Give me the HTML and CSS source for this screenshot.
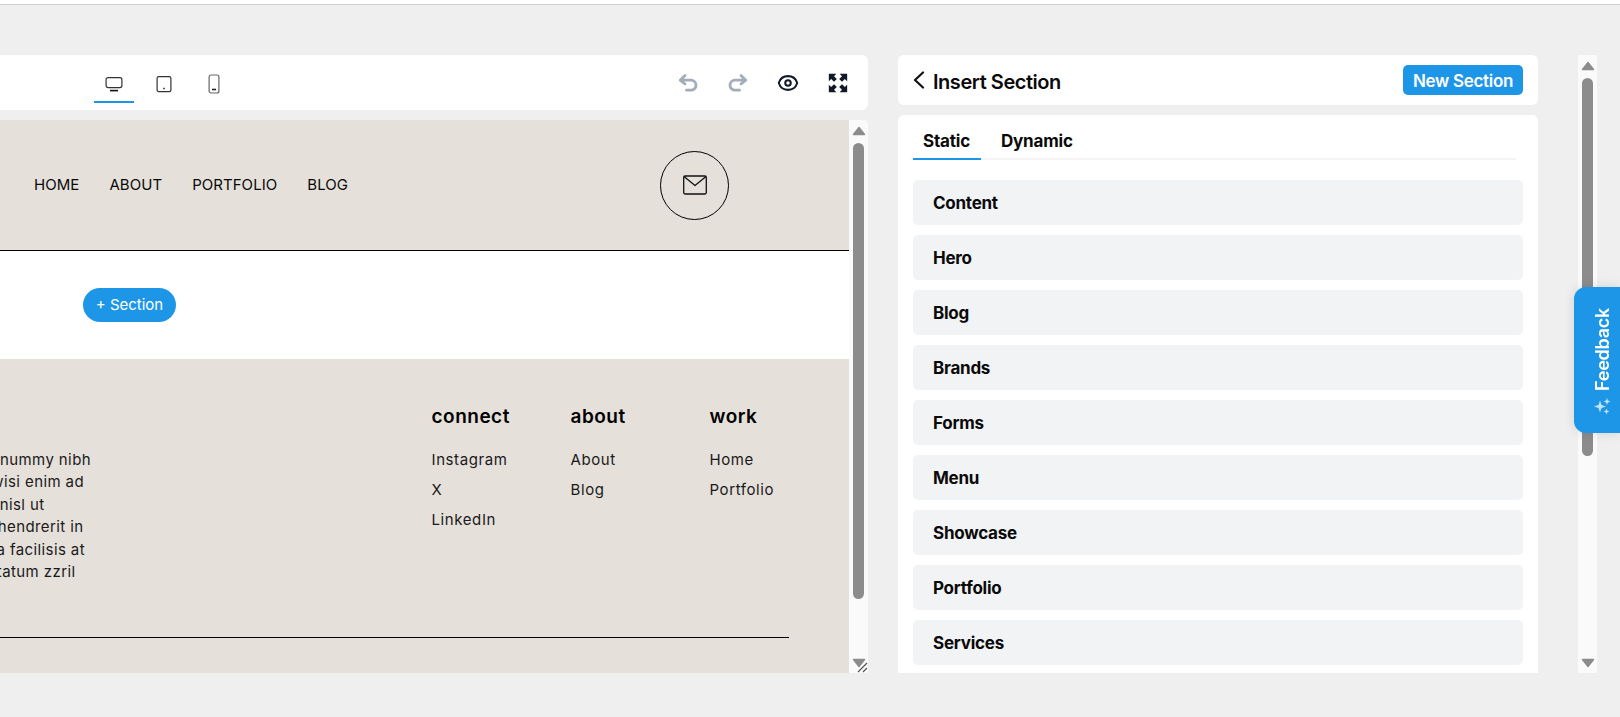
FILE: index.html
```html
<!DOCTYPE html>
<html lang="en">
<head>
<meta charset="utf-8">
<title>Insert Section</title>
<link rel="stylesheet" href="styles.css">
</head>
<body>
<div class="topbar"></div>
<main class="workspace">
  <section class="editor">
    <div class="toolbar">
      <div class="devices">
        <button class="device active" aria-label="Desktop">
          <svg width="18" height="18" viewBox="0 0 18 18" fill="none" stroke="#333" stroke-width="1.2"><rect x="1.1" y="2.6" width="15.8" height="10" rx="2"/><path d="M5 15.6h8" stroke="#111" stroke-width="1.6"/></svg>
        </button>
        <button class="device" aria-label="Tablet">
          <svg width="18" height="18" viewBox="0 0 18 18" fill="none" stroke="#333" stroke-width="1.2"><rect x="2.1" y="1.6" width="13.8" height="15" rx="1.6"/><path d="M8.2 13.5h1.6" stroke-width="1.6"/></svg>
        </button>
        <button class="device" aria-label="Mobile">
          <svg width="18" height="20" viewBox="0 0 18 20" fill="none" stroke="#666" stroke-width="1.2"><rect x="4.100" y="1" width="9.800" height="18" rx="2"/><path d="M7 15.500h4" stroke="#222" stroke-width="1.600"/></svg>
        </button>
      </div>
      <div class="actions">
        <span class="action">
          <svg width="20" height="20" viewBox="0 0 20 20" fill="none" stroke="#a3adba" stroke-width="2.800" stroke-linejoin="round" stroke-linecap="round"><path d="M7 2.500 2.200 7.200 7 11M2.200 7.200H13a5 5 0 0 1 0 10H8.500"/></svg>
        </span>
        <span class="action">
          <svg width="20" height="20" viewBox="0 0 20 20" fill="none" stroke="#a3adba" stroke-width="2.800" stroke-linejoin="round" stroke-linecap="round"><path d="M13 2.500l4.800 4.700L13 11M17.800 7.200H7a5 5 0 0 0 0 10h4.500"/></svg>
        </span>
        <span class="action">
          <svg width="22" height="22" viewBox="0 0 24 24" fill="none" stroke="#111827" stroke-width="2.200" stroke-linecap="round" stroke-linejoin="round"><path d="M2.036 12.322a1.012 1.012 0 0 1 0-.639C3.423 7.510 7.360 4.500 12 4.500c4.638 0 8.573 3.007 9.963 7.178.07.207.07.431 0 .639C20.577 16.490 16.640 19.500 12 19.500c-4.638 0-8.573-3.007-9.963-7.178Z"/><path d="M15 12a3 3 0 1 1-6 0 3 3 0 0 1 6 0Z"/></svg>
        </span>
        <span class="action">
          <svg width="20" height="20" viewBox="0 0 24 24" fill="#111827"><path d="M1 1h9l-2.800 2.800 3.400 3.400-3.400 3.400-3.400-3.400L1 10zM23 1v9l-2.800-2.800-3.400 3.400-3.400-3.400 3.400-3.400L14 1zM1 23v-9l2.800 2.800 3.400-3.400 3.400 3.400-3.400 3.400L10 23zM23 23h-9l2.800-2.800-3.400-3.400 3.400-3.400 3.400 3.400L23 14z"/></svg>
        </span>
      </div>
    </div>
    <div class="canvas">
      <div class="page">
        <header class="site-header">
          <nav class="site-nav">
            <a>HOME</a><a>ABOUT</a><a>PORTFOLIO</a><a>BLOG</a>
          </nav>
          <span class="mail">
            <svg width="26" height="20" viewBox="0 0 26 20" fill="none" stroke="#111" stroke-width="1.3" stroke-linejoin="round"><rect x="1.700" y="1" width="22.600" height="18" rx="1.400"/><path d="M2 1.600 13 10.600 24 1.600"/></svg>
          </span>
        </header>
        <div class="add-row"><button class="add-section">+ Section</button></div>
        <footer class="site-footer">
          <div class="footer-grid">
            <div class="footer-text">
              <span class="line l1">nonummy nibh</span>
              <span class="line l2">Ut wisi enim ad</span>
              <span class="line l3">lobortis nisl ut</span>
              <span class="line l4">in hendrerit in</span>
              <span class="line l5">nulla facilisis at</span>
              <span class="line l6">luptatum zzril</span>
            </div>
            <div class="footer-col"><h4>connect</h4><a>Instagram</a><a>X</a><a>LinkedIn</a></div>
            <div class="footer-col"><h4>about</h4><a>About</a><a>Blog</a></div>
            <div class="footer-col"><h4>work</h4><a>Home</a><a>Portfolio</a></div>
          </div>
          <div class="footer-rule"></div>
        </footer>
      </div>
      <div class="scrollbar canvas-bar">
        <svg class="arrow up" width="14" height="10" viewBox="0 0 14 10"><path d="M7 1.500 12.500 8.500H1.500Z"/></svg>
        <i class="thumb"></i>
        <svg class="arrow down" width="14" height="10" viewBox="0 0 14 10"><path d="M1.500 1.500H12.500L7 8.500Z"/></svg>
        <svg class="grip" width="11" height="11" viewBox="0 0 11 11" stroke="#555" stroke-width="1.200"><path d="M1 10 10 1M6 10l4-4"/></svg>
      </div>
    </div>
  </section>

  <aside class="side">
    <div class="side-head">
      <h2><svg width="12" height="18" viewBox="0 0 12 18" fill="none" stroke="#111" stroke-width="2.200" stroke-linecap="round" stroke-linejoin="round"><path d="M10 1.500 2 9l8 7.500"/></svg>Insert Section</h2>
      <button class="new-section">New Section</button>
    </div>
    <div class="side-panel">
      <div class="tabs"><span class="tab active">Static</span><span class="tab">Dynamic</span></div>
      <ul class="blocks">
        <li>Content</li>
        <li>Hero</li>
        <li>Blog</li>
        <li>Brands</li>
        <li>Forms</li>
        <li>Menu</li>
        <li>Showcase</li>
        <li>Portfolio</li>
        <li>Services</li>
      </ul>
    </div>
  </aside>

  <div class="scrollbar side-bar">
    <svg class="arrow up" width="14" height="10" viewBox="0 0 14 10"><path d="M7 1.500 12.500 8.500H1.500Z"/></svg>
    <i class="thumb"></i>
    <svg class="arrow down" width="14" height="10" viewBox="0 0 14 10"><path d="M1.500 1.500H12.500L7 8.500Z"/></svg>
  </div>
</main>
<button class="feedback">
  <span>Feedback</span>
  <svg width="18" height="18" viewBox="0 0 18 18" fill="#c4e3f9"><path d="M6 2.500 7.500 7 12 8.500 7.500 10 6 14.500 4.500 10 0 8.500 4.500 7zM13 0l.9 2.600 2.600.9-2.600.9-.9 2.600-.9-2.600-2.600-.9 2.600-.9zM12.500 10.500l.8 2.200 2.200.8-2.200.8-.8 2.200-.8-2.200-2.200-.8 2.200-.8z"/></svg>
</button>
</body>
</html>
```

FILE: styles.css
```css
* { box-sizing: border-box; }
html, body { margin: 0; height: 100%; overflow: hidden; }
body { background: #efefef; font-family: Inter, "Liberation Sans", sans-serif; color: #000; }
button { border: 0; font-family: inherit; padding: 0; }
i { display: block; }

.topbar { height: 5px; background: #fff; border-bottom: 1px solid #cfcfcf; }
.workspace { display: flex; height: 618px; margin-top: 50px; align-items: stretch; }

/* editor */
.editor { width: 868px; display: flex; flex-direction: column; gap: 10px; }
.toolbar { height: 55px; flex: none; background: #fff; border-radius: 0 6px 6px 0; display: flex; justify-content: space-between; padding: 0 18px 0 94px; }
.devices { display: flex; gap: 10px; }
.device { width: 40px; height: 48px; background: none; border-bottom: 2px solid transparent; display: flex; align-items: center; justify-content: center; padding-top: 12px; }
.device.active { border-bottom-color: #1e96e8; }
.actions { display: flex; gap: 26px; align-items: center; }
.action { width: 24px; height: 24px; display: flex; align-items: center; justify-content: center; }

.canvas { flex: 1; min-height: 0; display: flex; }
.page { width: 849px; display: flex; flex-direction: column; }
.site-header { height: 131px; flex: none; background: #e5e0da; border-bottom: 1px solid #000; display: flex; align-items: center; padding: 0 120px 0 34px; justify-content: space-between; }
.site-nav { display: flex; gap: 30px; font-size: 15px; line-height: 20px; letter-spacing: .05px; color: #0a0a0a; }
.mail { width: 69px; height: 69px; border: 1px solid #000; border-radius: 50%; display: flex; align-items: center; justify-content: center; }
.add-row { height: 108px; flex: none; background: #fff; padding: 37px 0 0 83px; }
.add-section { width: 93px; height: 34px; border-radius: 17px; background: #1e96e8; color: #fff; font-size: 15px; line-height: 32px; }

.site-footer { flex: 1; background: #e5e0da; padding-top: 46px; }
.footer-grid { display: grid; grid-template-columns: 532px 139px 139px 1fr; margin-left: -100px; }
.footer-text { display: flex; flex-direction: column; padding-top: 44px; font-size: 15px; line-height: 22.4px; color: #1a1a1a; letter-spacing: .4px; }
.line { text-align: right; white-space: nowrap; }
.l1 { padding-right: 341px; }
.l2 { padding-right: 348px; }
.l3 { padding-right: 387.500px; }
.l4 { padding-right: 348.500px; }
.l5 { padding-right: 347px; }
.l6 { padding-right: 356.500px; }
.footer-col { display: flex; flex-direction: column; font-size: 15px; line-height: 30px; color: #1a1a1a; letter-spacing: .6px; margin-left: -.5px; }
.footer-col h4 { margin: 0 0 16px; font-size: 19px; line-height: 24px; font-weight: 600; color: #000; letter-spacing: .5px; }
.footer-rule { width: 789px; height: 1px; background: #000; margin-top: 54px; }

/* scrollbars */
.scrollbar { position: relative; width: 19px; flex: none; background: #fafafa; display: flex; flex-direction: column; align-items: center; }
.canvas-bar { border-radius: 0 4px 0 0; }
.thumb { width: 11px; background: #8c8c8c; border-radius: 6px; flex: none; }
.canvas-bar .thumb { height: 456px; margin-top: 7px; }
.side-bar .thumb { height: 378px; margin-top: 7px; }
.arrow { flex: none; fill: #8c8c8c; stroke: #8c8c8c; stroke-width: 1.5; stroke-linejoin: round; }
.arrow.up { margin-top: 6px; }
.arrow.down { margin-top: auto; margin-bottom: 5px; }
.grip { position: absolute; right: 0; bottom: 0; }

/* side panel */
.side { width: 640px; margin-left: 30px; display: flex; flex-direction: column; gap: 10px; }
.side-head { height: 50px; flex: none; background: #fff; border-radius: 6px; display: flex; align-items: center; justify-content: space-between; padding: 0 15px; }
.side-head h2 { margin: 0; padding-top: 4px; display: flex; align-items: center; gap: 8px; font-size: 20px; line-height: 24px; font-weight: 600; letter-spacing: -.45px; color: #0a0a0a; }
.side-head h2 svg { margin-top: -4px; }
.new-section { width: 120px; height: 30px; border-radius: 5px; background: #1e96e8; color: #fff; font-size: 17px; font-weight: 600; letter-spacing: -.3px; padding-top: 2px; }
.side-panel { flex: 1; min-height: 0; overflow: hidden; background: #fff; border-radius: 6px 6px 0 0; padding: 0 15px; }
.tabs { display: flex; height: 45px; margin-right: 7px; border-bottom: 2px solid #f3f4f6; }
.tab { height: 45px; padding: 14px 10px 0; font-size: 17px; line-height: 24px; font-weight: 700; letter-spacing: -.2px; color: #0a0a0a; }
.tab.active { width: 68px; border-bottom: 2px solid #1e96e8; margin-right: 10px; }
.blocks { list-style: none; margin: 20px 0 0; padding: 0; display: flex; flex-direction: column; gap: 10px; }
.blocks li { height: 45px; flex: none; background: #f2f3f5; border-radius: 5px; padding: 1px 0 0 20px; font-size: 17px; line-height: 45px; font-weight: 700; letter-spacing: -.25px; color: #0a0a0a; }

.side-bar { margin-left: 40px; }

/* feedback */
.feedback { position: fixed; right: 0; top: 287px; width: 46px; height: 146px; background: #1e96e8; border-radius: 12px 0 0 12px; box-shadow: 0 0 12px rgba(0,0,0,.12); color: #fff; display: flex; flex-direction: column; align-items: center; gap: 7px; padding: 21px 0 0 11px; }
.feedback span { writing-mode: vertical-rl; transform: rotate(180deg); font-size: 18px; line-height: 20px; font-weight: 600; letter-spacing: -.25px; }
```
